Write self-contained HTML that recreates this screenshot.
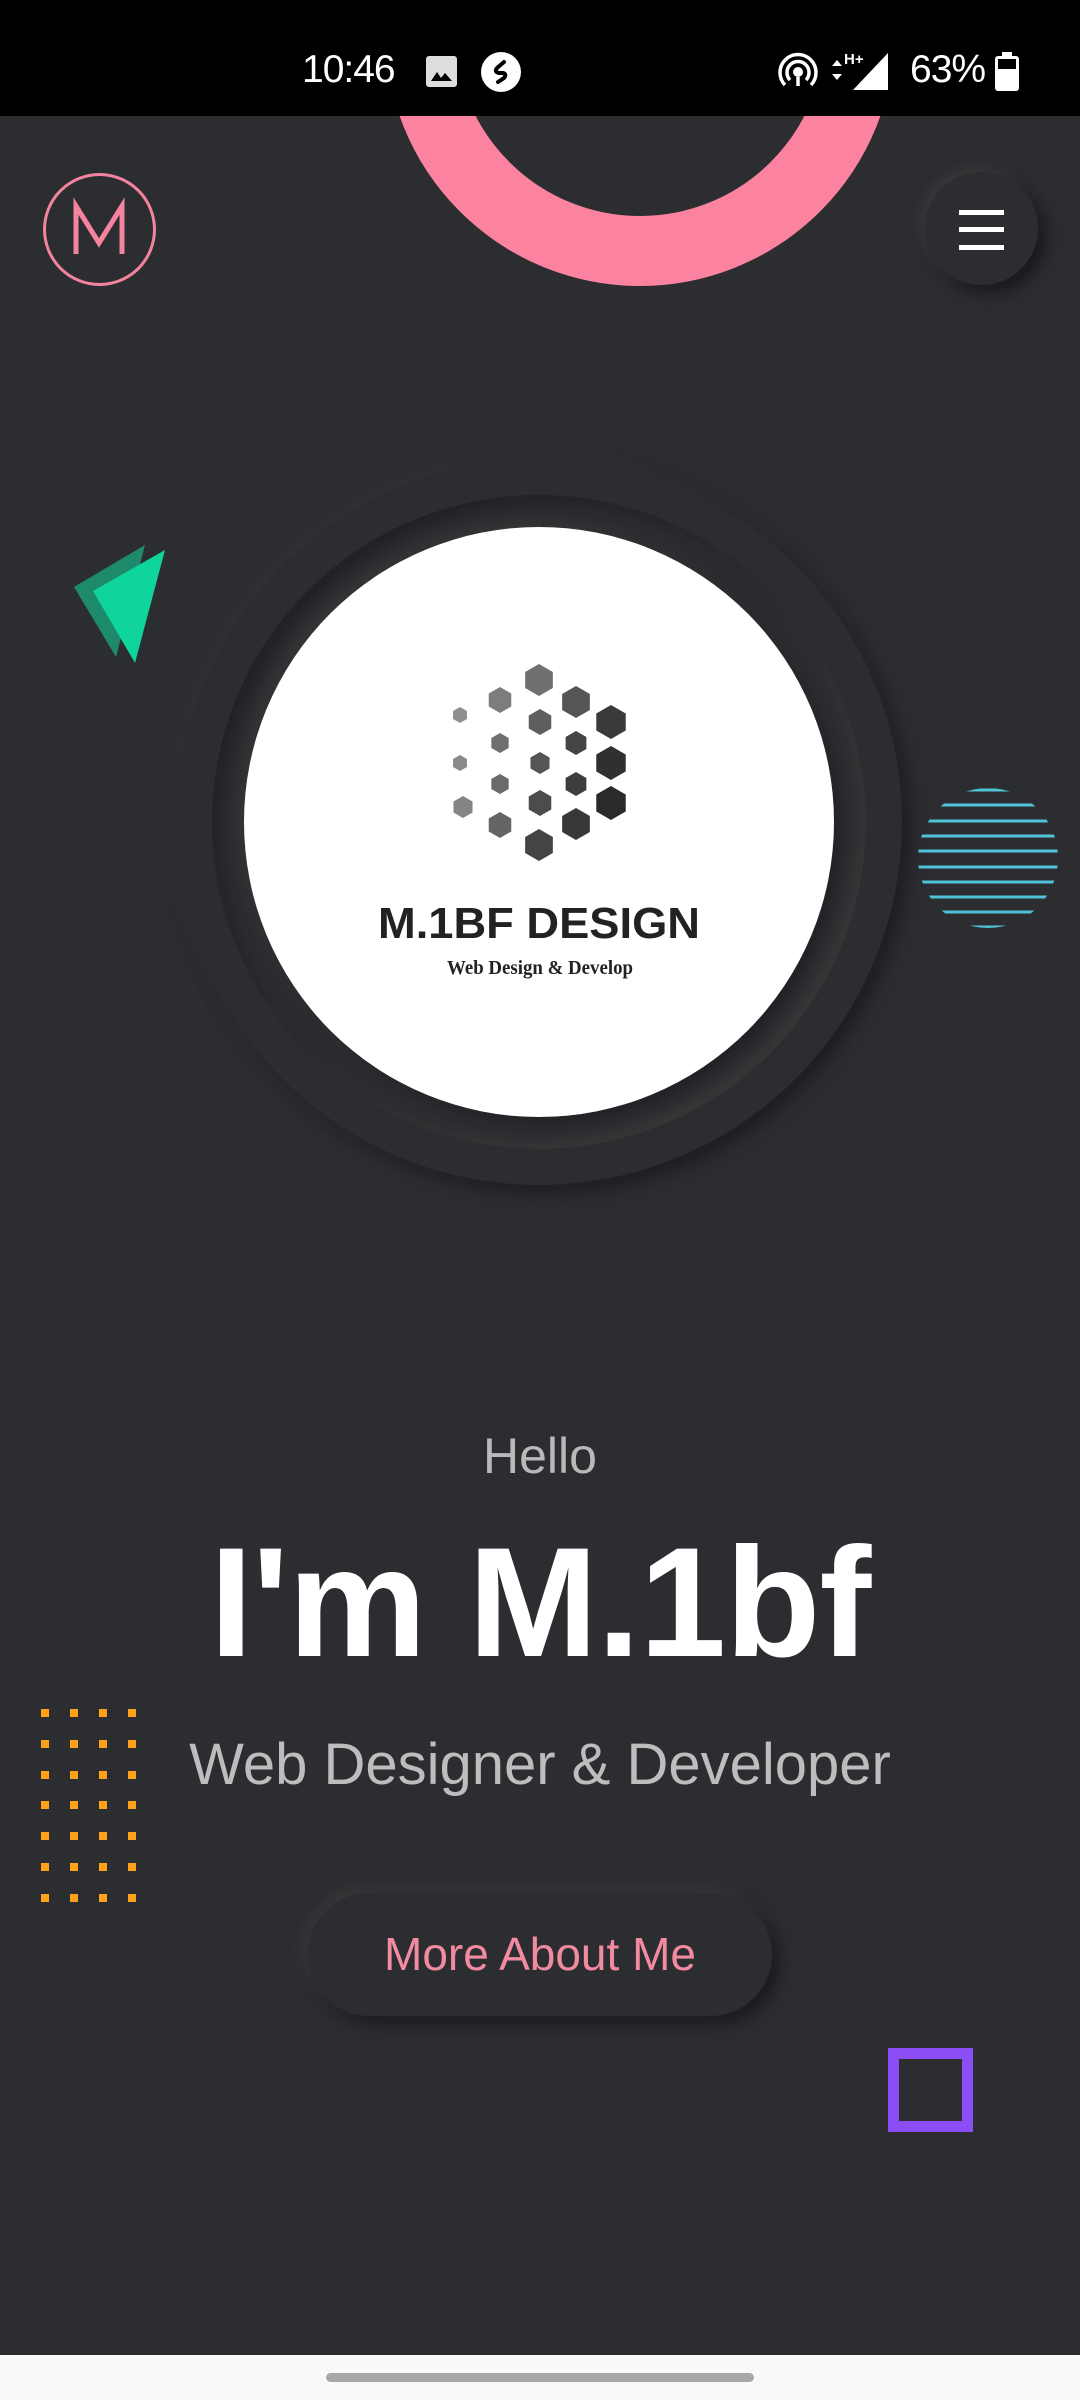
<!DOCTYPE html>
<html><head><meta charset="utf-8">
<style>
*{margin:0;padding:0;box-sizing:border-box}
body{width:1080px;height:2400px;background:#2c2d31;position:relative;overflow:hidden;font-family:"Liberation Sans",sans-serif}
.abs{position:absolute}
</style></head><body>

<div class="abs" style="left:385px;top:-224px;width:510px;height:510px;border-radius:50%;border:70px solid #fc839f"></div>

<div class="abs" style="left:0;top:0;width:1080px;height:116px;background:#000"></div>
<div class="abs" style="left:302px;top:48px;color:#fff;font-size:39px;line-height:44px;letter-spacing:-1px">10:46</div>
<svg class="abs" style="left:425px;top:55px" width="34" height="34" viewBox="0 0 34 34"><rect x="1" y="1" width="31" height="31" rx="3" fill="#ddd"/><path d="M6 26 L12 17 L16 23 L20 18 L27 26 Z" fill="#000"/></svg>
<svg class="abs" style="left:480px;top:51px" width="42" height="42" viewBox="0 0 42 42"><circle cx="21" cy="21" r="20" fill="#fff"/><path d="M24 11 L17 17 Q14 21 19 22 L23 22 Q27 23 24 27 L18 31" stroke="#000" stroke-width="4" fill="none" stroke-linecap="round"/></svg>
<svg class="abs" style="left:776px;top:50px" width="44" height="44" viewBox="0 0 44 44" fill="none" stroke="#fff" stroke-width="3.5"><circle cx="22" cy="22" r="5" fill="#fff" stroke="none"/><path d="M14 30 A11 11 0 1 1 30 30"/><path d="M9 35 A18 18 0 1 1 35 35"/><path d="M22 27 L22 36"/></svg>
<svg class="abs" style="left:830px;top:50px" width="62" height="42" viewBox="0 0 62 42"><path d="M2 16 L7 10 L12 16Z M2 24 L7 30 L12 24Z" fill="#fff"/><text x="14" y="14" fill="#fff" font-size="15" font-family="Liberation Sans" font-weight="bold">H+</text><path d="M58 3 L58 40 L23 40 Z" fill="#fff"/></svg>
<div class="abs" style="left:910px;top:48px;color:#fff;font-size:39px;line-height:44px;letter-spacing:-1px">63%</div>
<svg class="abs" style="left:994px;top:52px" width="26" height="40" viewBox="0 0 26 40"><rect x="8" y="0" width="10" height="4" fill="#fff"/><rect x="1" y="4" width="24" height="35" rx="3" fill="#fff"/><rect x="4" y="7" width="18" height="10" fill="#000"/></svg>

<div class="abs" style="left:43px;top:173px;width:113px;height:113px;border-radius:50%;border:3.5px solid #f4849e"></div>
<svg class="abs" style="left:43px;top:173px" width="113" height="113" viewBox="0 0 113 113"><path d="M33 81 L33 33 L56 70 L79 33 L79 81" stroke="#f4849e" stroke-width="5" fill="none"/></svg>

<div class="abs" style="left:925px;top:172px;width:113px;height:113px;border-radius:50%;background:#2c2d31;box-shadow:-5px -5px 12px rgba(70,70,66,.45),8px 8px 16px rgba(0,0,0,.45)"></div>
<div class="abs" style="left:959px;top:210px;width:45px;height:5px;background:#fff"></div>
<div class="abs" style="left:959px;top:227px;width:45px;height:5px;background:#fff"></div>
<div class="abs" style="left:959px;top:245px;width:45px;height:5px;background:#fff"></div>

<svg class="abs" style="left:0;top:520px" width="240" height="180" viewBox="0 520 240 180"><path d="M74 587 L145 545 L116 657Z" fill="#1d8a6c"/><path d="M93 591 L165 550 L135 663Z" fill="#0fd49b"/></svg>

<div class="abs" style="left:176px;top:459px;width:726px;height:726px;border-radius:50%;background:#2c2d31;box-shadow:-6px -6px 14px rgba(60,60,56,.35),8px 8px 18px rgba(0,0,0,.35)"></div>
<div class="abs" style="left:212px;top:495px;width:654px;height:654px;border-radius:50%;background:#2c2d31;box-shadow:inset 8px 8px 14px rgba(0,0,0,.25),inset -6px -6px 14px rgba(70,70,64,.45)"></div>
<div class="abs" style="left:244px;top:527px;width:590px;height:590px;border-radius:50%;background:#fff;box-shadow:-6px -6px 12px rgba(70,70,64,.35),6px 6px 12px rgba(0,0,0,.25)"></div>

<svg class="abs" style="left:0;top:0" width="1080" height="1100" viewBox="0 0 1080 1100">
<defs><polygon id="h" points="0,-1 0.866,-0.5 0.866,0.5 0,1 -0.866,0.5 -0.866,-0.5"/></defs>
<g>
<use href="#h" transform="translate(460,715) scale(8)" fill="#8f8f8f"/>
<use href="#h" transform="translate(460,763) scale(8)" fill="#8a8a8a"/>
<use href="#h" transform="translate(463,807) scale(11)" fill="#858585"/>
<use href="#h" transform="translate(500,700) scale(13)" fill="#7d7d7d"/>
<use href="#h" transform="translate(500,743) scale(10)" fill="#6f6f6f"/>
<use href="#h" transform="translate(500,784) scale(10)" fill="#6a6a6a"/>
<use href="#h" transform="translate(500,825) scale(13)" fill="#656565"/>
<use href="#h" transform="translate(539,680) scale(16)" fill="#707070"/>
<use href="#h" transform="translate(540,722) scale(13)" fill="#5e5e5e"/>
<use href="#h" transform="translate(540,763) scale(11)" fill="#555"/>
<use href="#h" transform="translate(540,803) scale(13)" fill="#4c4c4c"/>
<use href="#h" transform="translate(539,845) scale(16)" fill="#444"/>
<use href="#h" transform="translate(576,702) scale(16)" fill="#555"/>
<use href="#h" transform="translate(576,743) scale(12)" fill="#454545"/>
<use href="#h" transform="translate(576,784) scale(12)" fill="#3e3e3e"/>
<use href="#h" transform="translate(576,824) scale(16)" fill="#383838"/>
<use href="#h" transform="translate(611,722) scale(17)" fill="#3a3a3a"/>
<use href="#h" transform="translate(611,763) scale(17)" fill="#303030"/>
<use href="#h" transform="translate(611,803) scale(17)" fill="#2a2a2a"/>
</g>
<text x="378" y="938" textLength="322" lengthAdjust="spacingAndGlyphs" font-family="Liberation Sans" font-weight="bold" font-size="44" fill="#222">M.1BF  DESIGN</text>
<text x="447" y="974" textLength="186" lengthAdjust="spacingAndGlyphs" font-family="Liberation Serif" font-weight="bold" font-size="20" fill="#222">Web Design &amp; Develop</text>
</svg>

<svg class="abs" style="left:918px;top:788px" width="140" height="140" viewBox="0 0 140 140">
<defs><clipPath id="c"><circle cx="70" cy="70" r="70"/></clipPath></defs>
<g clip-path="url(#c)" stroke="#4fc3d7" stroke-width="3">
<line x1="0" y1="2" x2="140" y2="2"/><line x1="0" y1="17" x2="140" y2="17"/><line x1="0" y1="33" x2="140" y2="33"/><line x1="0" y1="48" x2="140" y2="48"/><line x1="0" y1="63" x2="140" y2="63"/><line x1="0" y1="79" x2="140" y2="79"/><line x1="0" y1="94" x2="140" y2="94"/><line x1="0" y1="109" x2="140" y2="109"/><line x1="0" y1="124" x2="140" y2="124"/><line x1="0" y1="139" x2="140" y2="139"/>
</g></svg>

<div class="abs" style="left:0;top:1426px;width:1080px;text-align:center;color:#b9b9b9;font-size:50px;line-height:60px">Hello</div>
<div class="abs" style="left:0;top:1518px;width:1080px;text-align:center;color:#fff;font-size:156px;font-weight:bold;line-height:170px;letter-spacing:-1px">I'm M.1bf</div>
<div class="abs" style="left:0;top:1731px;width:1080px;text-align:center;color:#bdbdbd;font-size:58px;line-height:68px">Web Designer &amp; Developer</div>

<svg class="abs" style="left:0;top:1680px" width="160" height="240" viewBox="0 1680 160 240" fill="#ffa21a">
<g id="r"><rect x="41" y="1709" width="8" height="8"/><rect x="70" y="1709" width="8" height="8"/><rect x="99" y="1709" width="8" height="8"/><rect x="128" y="1709" width="8" height="8"/></g>
<use href="#r" y="31"/><use href="#r" y="62"/><use href="#r" y="92"/><use href="#r" y="123"/><use href="#r" y="154"/><use href="#r" y="185"/>
</svg>

<div class="abs" style="left:308px;top:1893px;width:464px;height:123px;border-radius:62px;background:#2c2d31;box-shadow:-6px -6px 14px rgba(70,70,64,.4),8px 8px 16px rgba(0,0,0,.4);color:#f28aa0;font-size:46px;line-height:123px;text-align:center">More About Me</div>

<div class="abs" style="left:888px;top:2048px;width:85px;height:84px;border:11px solid #8b4ef5"></div>

<div class="abs" style="left:0;top:2355px;width:1080px;height:45px;background:#f9f9f9"></div>
<div class="abs" style="left:326px;top:2373px;width:428px;height:9px;border-radius:5px;background:#a8a8a8"></div>
</body></html>
